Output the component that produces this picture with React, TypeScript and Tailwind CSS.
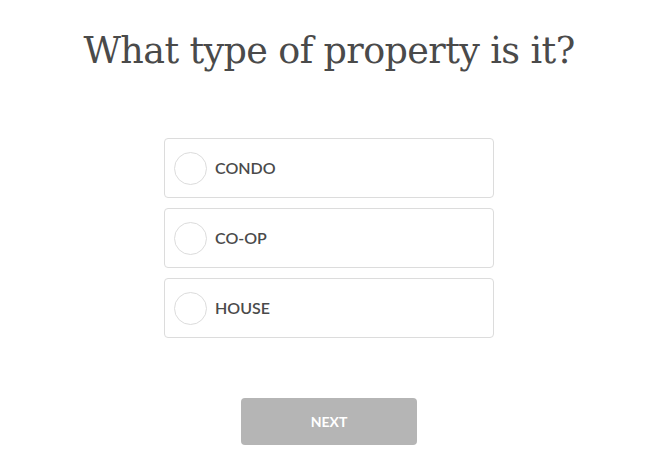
import React from "react";

const options = ["CONDO", "CO-OP", "HOUSE"];

export default function App() {
  return (
    <div className="w-[658px] h-[470px] bg-white flex flex-col items-center">
      <h1 className="mt-[28px] text-[36.5px] leading-[46px] text-[#4a4a4a] [font-family:'DejaVu_Serif',serif] tracking-[-0.6px]">
        What type of property is it?
      </h1>
      <div className="mt-[64px] flex flex-col gap-[10px] w-[330px]">
        {options.map((o) => (
          <div
            key={o}
            className="h-[60px] border border-[#dcdcdc] rounded-[4px] flex items-center pl-[9px]"
          >
            <div className="w-[33px] h-[33px] rounded-full border border-[#dcdcdc]" />
            <span className="ml-[8px] text-[16px] font-semibold text-[#4a4a4a] [font-family:Lato,sans-serif]">
              {o}
            </span>
          </div>
        ))}
      </div>
      <button className="mt-[60px] w-[176px] h-[47px] rounded-[4px] bg-[#b5b5b5] text-white text-[14px] font-bold [font-family:Lato,sans-serif]">
        NEXT
      </button>
    </div>
  );
}
